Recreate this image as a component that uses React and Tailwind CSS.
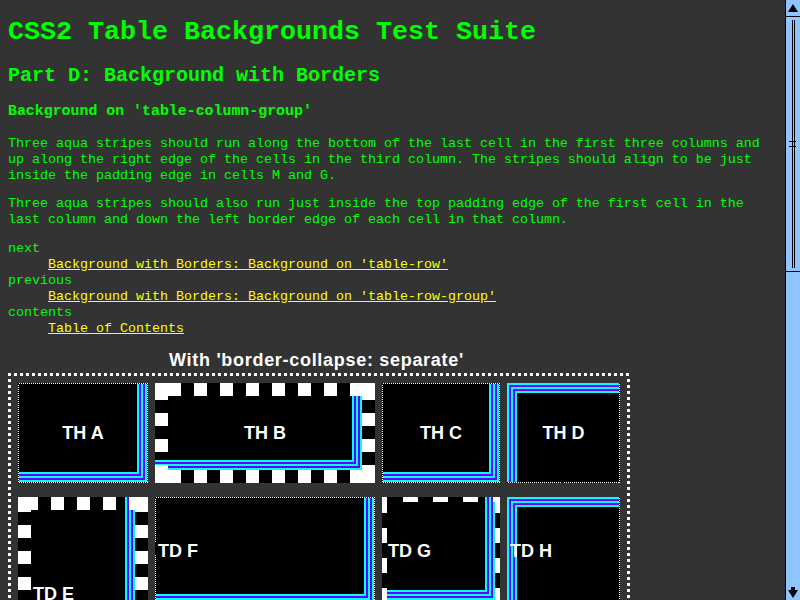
const CYAN = '#00ffff';
const PURPLE = '#6600ff';

// nested L stripes meeting in the bottom-right corner (cx, cy = outer edge)
function brStripes(cx, cy, x0, y0) {
  const out = [];
  for (let i = 0; i < 5; i++) {
    const f = i % 2 ? PURPLE : CYAN;
    out.push(<rect key={'v' + i} x={cx - 2 * i - 2} y={y0} width="2" height={cy - 2 * i - y0} fill={f} />);
    out.push(<rect key={'h' + i} x={x0} y={cy - 2 * i - 2} width={cx - 2 * i - x0} height="2" fill={f} />);
  }
  return out;
}

// nested L stripes meeting in the top-left corner
function tlStripes(cx, cy, x1, y1) {
  const out = [];
  for (let i = 0; i < 5; i++) {
    const f = i % 2 ? PURPLE : CYAN;
    out.push(<rect key={'v' + i} x={cx + 2 * i} y={cy + 2 * i} width="2" height={y1 - cy - 2 * i} fill={f} />);
    out.push(<rect key={'h' + i} x={cx + 2 * i} y={cy + 2 * i} width={x1 - cx - 2 * i} height="2" fill={f} />);
  }
  return out;
}

function vStripes(cx, y0, y1) {
  const out = [];
  for (let i = 0; i < 5; i++) {
    const f = i % 2 ? PURPLE : CYAN;
    out.push(<rect key={'v' + i} x={cx - 2 * i - 2} y={y0} width="2" height={y1 - y0} fill={f} />);
  }
  return out;
}

function dotted(w, h) {
  return (
    <rect x="0.5" y="0.5" width={w - 1} height={h - 1} fill="none" stroke="#fff" strokeDasharray="1 1" />
  );
}

// white blocks of a chunky dotted / dashed border
function blocks(w, h, t, xs, ys, len) {
  const r = [
    [0, 0, t, t],
    [w - t, 0, t, t],
    [0, h - t, t, t],
    [w - t, h - t, t, t],
  ];
  xs.forEach((x) => {
    r.push([x, 0, len, t]);
    r.push([x, h - t, len, t]);
  });
  ys.forEach((y) => {
    r.push([0, y, t, len]);
    r.push([w - t, y, t, len]);
  });
  return r.map(([x, y, bw, bh], i) => <rect key={'b' + i} x={x} y={y} width={bw} height={bh} fill="#fff" />);
}

const range = (start, step, n) => Array.from({ length: n }, (_, i) => start + step * i);

function Deco({ w, h, children }) {
  return (
    <svg className="absolute inset-0" width={w} height={h} shapeRendering="crispEdges">
      {children}
    </svg>
  );
}

function OuterBorder({ w, h }) {
  const sq = [];
  for (let x = 0; x <= w - 3; x += 6) {
    sq.push([x, 0]);
    sq.push([x, h - 3]);
  }
  for (let y = 6; y <= h - 6; y += 6) {
    sq.push([0, y]);
    sq.push([w - 3, y]);
  }
  return (
    <svg className="absolute inset-0" width={w} height={h} shapeRendering="crispEdges">
      {sq.map(([x, y], i) => (
        <rect key={i} x={x} y={y} width="3" height="3" fill="#fff" />
      ))}
    </svg>
  );
}

function Scrollbar() {
  return (
    <div className="flex h-[600px] w-[15px] shrink-0 flex-col border-l border-black bg-[#8ec4ff]">
      <div className="flex h-[16px] items-center justify-center">
        <svg width="10" height="8">
          <path d="M5 0 L10 8 L0 8 Z" fill="#000" />
        </svg>
      </div>
      <div className="relative flex h-[256px] justify-center border-y border-black">
        <div className="mt-[3px] h-[248px] w-[3px] border-x border-black" />
        <div className="absolute top-[124px] left-[3px] h-[1px] w-[7px] bg-black" />
        <div className="absolute top-[129px] left-[3px] h-[1px] w-[7px] bg-black" />
      </div>
      <div className="flex-1" />
      <div className="flex h-[17px] flex-col items-center justify-end pb-[2px]">
        <div className="h-[3px] w-[4px] bg-black" />
        <svg width="10" height="8">
          <path d="M0 0 L10 0 L5 8 Z" fill="#000" />
        </svg>
      </div>
    </div>
  );
}

const thText = "relative text-[18px] leading-[21px] font-bold text-white font-['Liberation_Sans',Arial,sans-serif]";

export default function App() {
  return (
    <div className="flex h-[600px] w-[800px] overflow-hidden bg-[#333333]">
      <div className="min-w-0 flex-1 overflow-hidden px-[8px] pt-[16px] text-[13.33px] leading-4 text-[#00ff00] font-['Liberation_Mono','Courier_New',monospace]">
        <h1 className="text-[26.67px] leading-[32px] font-bold">CSS2 Table Backgrounds Test Suite</h1>
        <h2 className="mt-[16px] text-[20px] leading-[24px] font-bold">Part D: Background with Borders</h2>
        <h3 className="mt-[14px] text-[14.9px] leading-[18px] font-bold">Background on 'table-column-group'</h3>
        <p className="mt-[16px]">
          Three aqua stripes should run along the bottom of the last cell in the first three columns and up along the
          right edge of the cells in the third column. The stripes should align to be just inside the padding edge in
          cells M and G.
        </p>
        <p className="mt-[12px]">
          Three aqua stripes should also run just inside the top padding edge of the first cell in the last column and
          down the left border edge of each cell in that column.
        </p>
        <dl className="mt-[13px]">
          <dt>next</dt>
          <dd className="ml-10">
            <a className="text-[#ffff00] underline">Background with Borders: Background on 'table-row'</a>
          </dd>
          <dt>previous</dt>
          <dd className="ml-10">
            <a className="text-[#ffff00] underline">Background with Borders: Background on 'table-row-group'</a>
          </dd>
          <dt>contents</dt>
          <dd className="ml-10">
            <a className="text-[#ffff00] underline">Table of Contents</a>
          </dd>
        </dl>

        <div className="mt-[13px] w-[622px] pr-[5px] text-center text-[18px] leading-[21px] font-bold tracking-[0.7px] text-white font-['Liberation_Sans',Arial,sans-serif]">
          With 'border-collapse: separate'
        </div>

        {/* test table */}
        <div className="relative mt-[2px] h-[334px] w-[622px] p-[10px]">
          <OuterBorder w={622} h={334} />
          <div className="flex flex-col gap-[14px]">
            <div className="flex gap-[7px]">
              <div className="relative flex h-[100px] w-[130px] shrink-0 items-center justify-center bg-black">
                <Deco w={130} h={100}>
                  {brStripes(129, 99, 1, 1)}
                  {dotted(130, 100)}
                </Deco>
                <span className={thText}>TH A</span>
              </div>
              <div className="relative flex h-[100px] w-[220px] shrink-0 items-center justify-center bg-black">
                <Deco w={220} h={100}>
                  {brStripes(207, 87, 0, 13)}
                  {blocks(220, 100, 13, range(13, 26, 8), range(4, 26, 4), 13)}
                </Deco>
                <span className={thText}>TH B</span>
              </div>
              <div className="relative flex h-[100px] w-[118px] shrink-0 items-center justify-center bg-black">
                <Deco w={118} h={100}>
                  {brStripes(117, 99, 1, 1)}
                  {dotted(118, 100)}
                </Deco>
                <span className={thText}>TH C</span>
              </div>
              <div className="relative flex h-[100px] w-[113px] shrink-0 items-center justify-center bg-black">
                <Deco w={113} h={100}>
                  {dotted(113, 100)}
                  {tlStripes(0, 0, 112, 99)}
                </Deco>
                <span className={thText}>TH D</span>
              </div>
            </div>

            <div className="flex items-start gap-[7px]">
              <div className="relative flex h-[200px] w-[130px] shrink-0 flex-col items-start bg-black pt-[87px] pl-[15px]">
                <Deco w={130} h={200}>
                  {vStripes(117, 0, 200)}
                  {blocks(130, 200, 13, range(7, 26, 5), range(2, 26, 8), 13)}
                </Deco>
                <span className={thText}>TD E</span>
              </div>
              <div className="relative flex h-[108px] w-[220px] shrink-0 items-center bg-black pl-[3px]">
                <Deco w={220} h={108}>
                  {brStripes(219, 107, 1, 1)}
                  {dotted(220, 108)}
                </Deco>
                <span className={thText}>TD F</span>
              </div>
              <div className="relative flex h-[108px] w-[118px] shrink-0 items-center bg-black pl-[6px]">
                <Deco w={118} h={108}>
                  {brStripes(113, 103, 0, 0)}
                  {blocks(118, 108, 5, range(21, 30, 4), range(1, 30, 4), 15)}
                </Deco>
                <span className={thText}>TD G</span>
              </div>
              <div className="relative flex h-[108px] w-[113px] shrink-0 items-center bg-black pl-[3px]">
                <Deco w={113} h={108}>
                  {dotted(113, 108)}
                  {tlStripes(0, 0, 112, 107)}
                </Deco>
                <span className={thText}>TD H</span>
              </div>
            </div>
          </div>
        </div>
      </div>
      <Scrollbar />
    </div>
  );
}
